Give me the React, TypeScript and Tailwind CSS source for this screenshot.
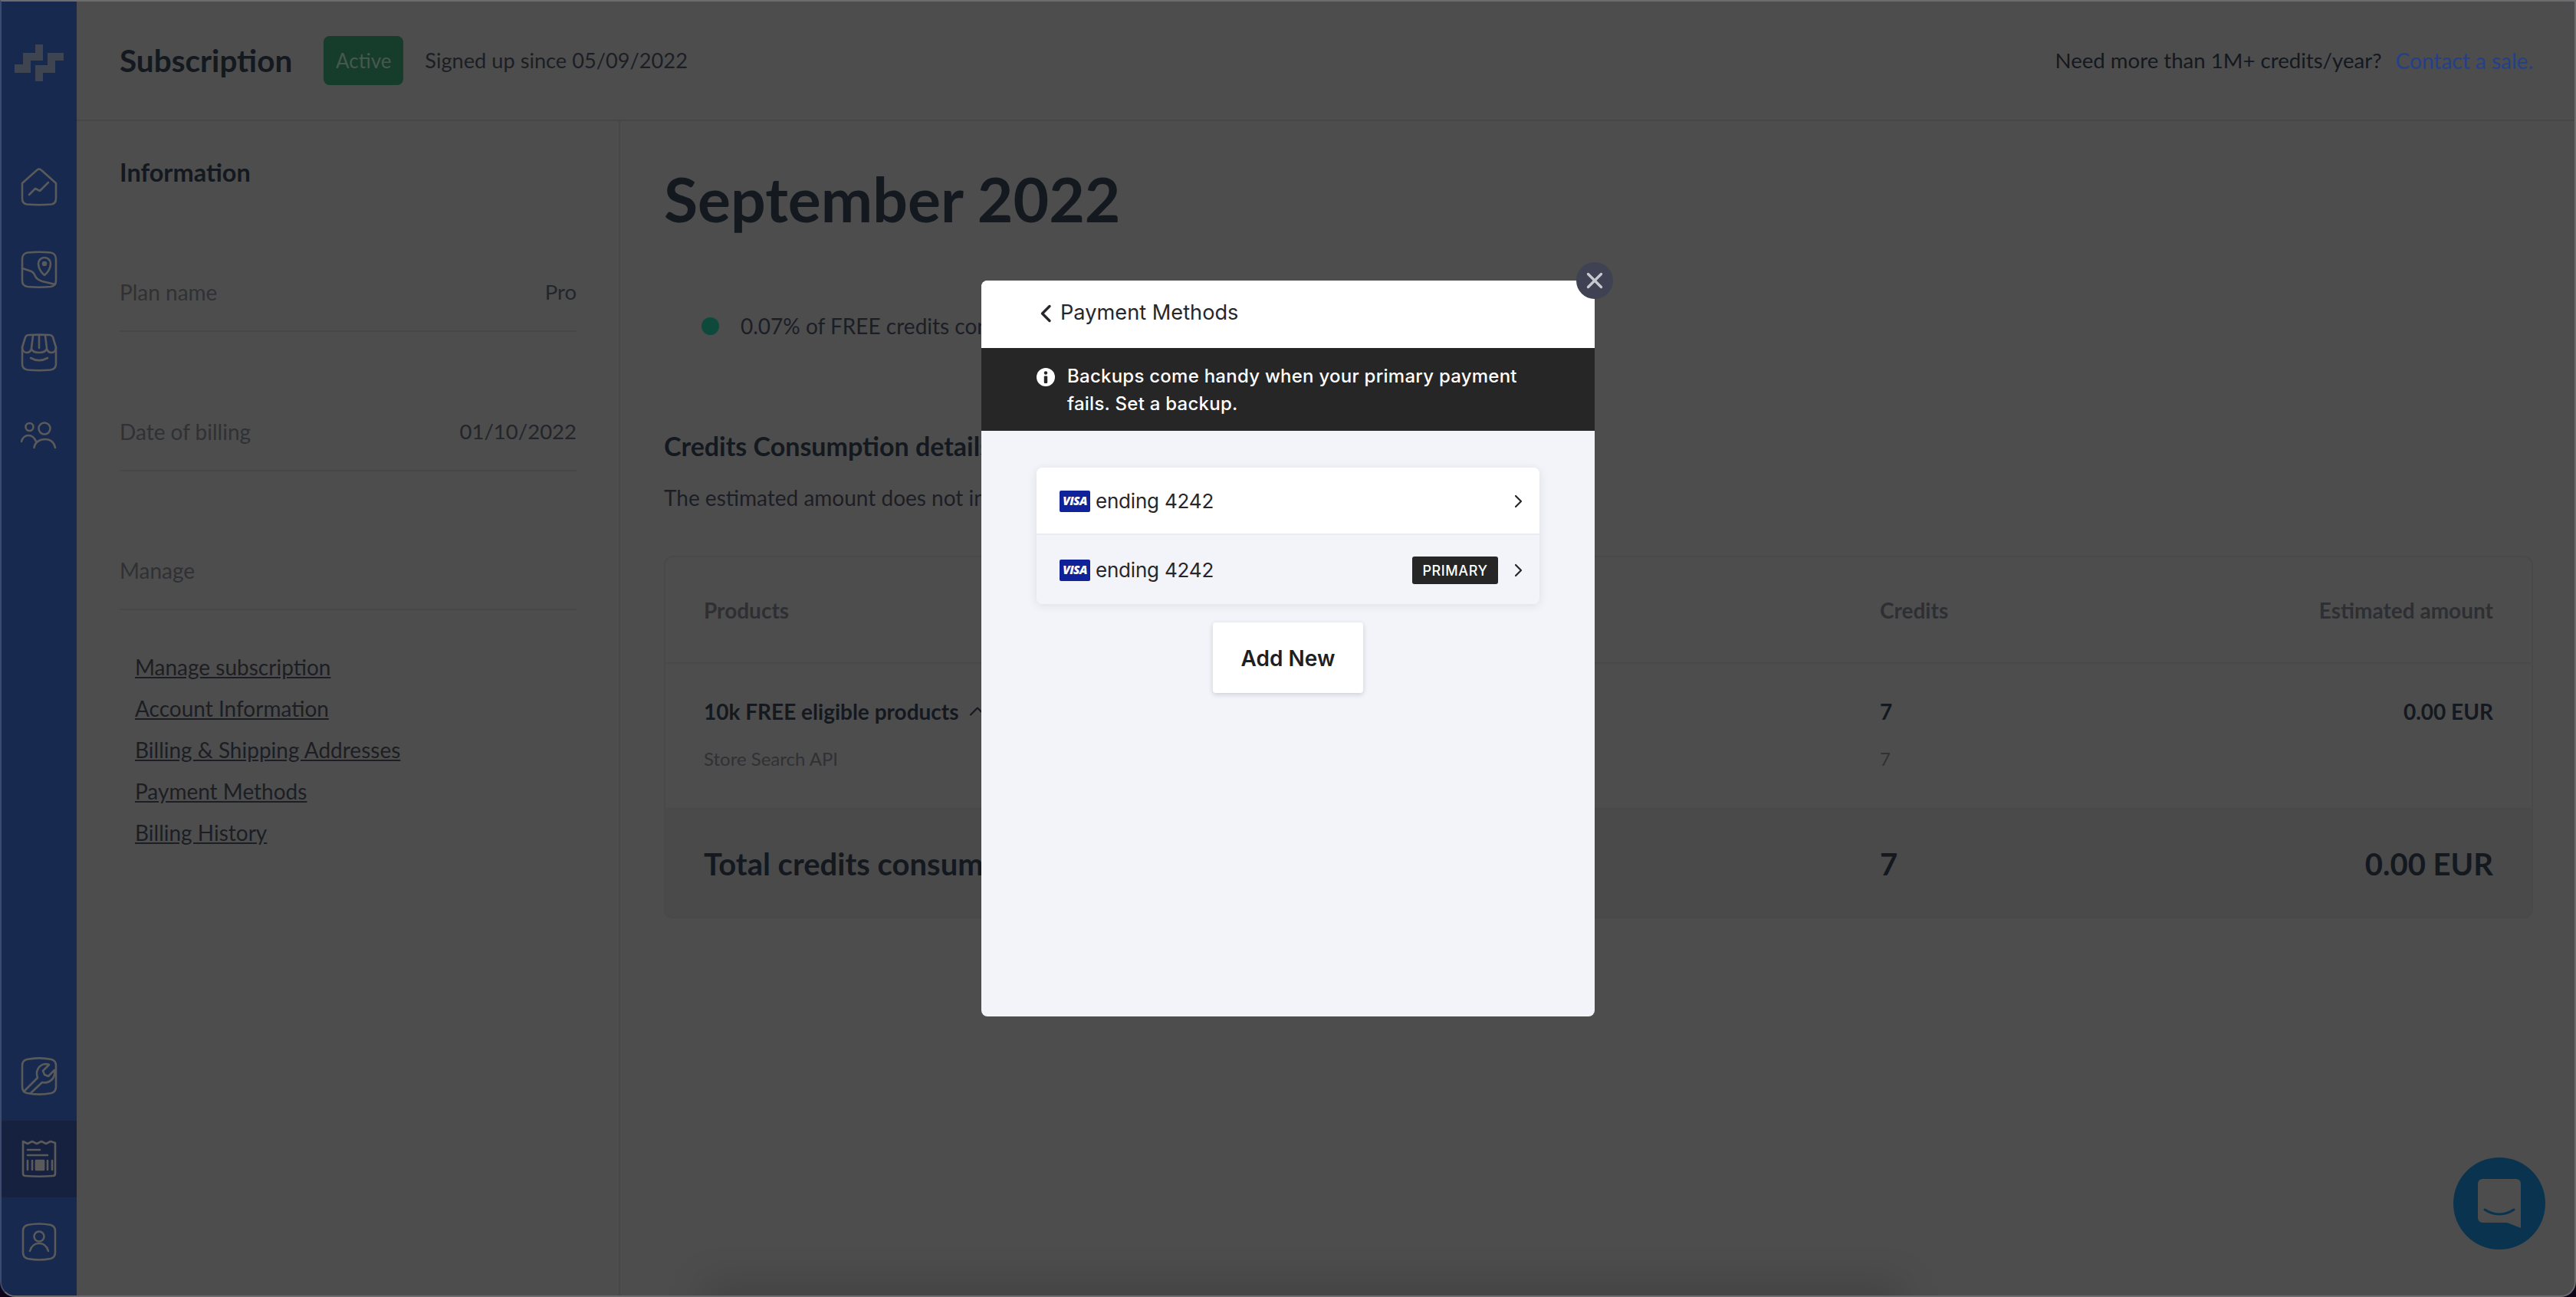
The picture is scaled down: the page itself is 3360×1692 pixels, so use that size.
import { ChevronUp, X } from 'lucide-react';

// Sidebar icons, drawn in a 48x50 box
const NavIcon = ({ children }: { children: React.ReactNode }) => (
  <svg width="48" height="50" viewBox="0 0 48 50" fill="none" stroke="#5a5a5a" strokeWidth="2.6" strokeLinecap="round" strokeLinejoin="round">
    {children}
  </svg>
);

const Logo = () => (
  <svg width="64" height="48" viewBox="18 58 64 48" fill="#3e4450">
    <path d="M45 58h10v21H39v5H29V69h16z" />
    <path d="M18 84h21v11H18z" />
    <path d="M61 69h21v10H71v16H55v11H45V85h16z" />
  </svg>
);

const topNav = [
  <NavIcon key="home">
    <path d="M2 20 21 3a4 4 0 0 1 6 0l19 17v20c0 5-2 7-6 7.500-10 1-22 1-32 0-4-.5-6-2.500-6-7.500z" />
    <path d="M11 35l8-8 6 3 11-11" />
  </NavIcon>,
  <NavIcon key="map">
    <path d="M2 11c0-5 3-8 7-8.500 10-1 20-1 30 0 4 .5 7 3.500 7 8.500v28c0 5-3 7.500-7 8-10 1-20 1-30 0-4-.5-7-3-7-8z" />
    <path d="M2 23l12 4c4 2 4 5 6 8 2 3 5 4 8 5l17 4" />
    <path d="M31 9c5 0 8 4 8 8 0 6-4 12-8 15-4-3-8-9-8-15 0-4 3-8 8-8z" />
    <circle cx="31" cy="17" r="2" fill="#5a5a5a" />
  </NavIcon>,
  <NavIcon key="store">
    <path d="M2 18v22c0 5 3 7 7 7.500 10 1 20 1 30 0 4-.5 7-2.500 7-7.500V18" />
    <path d="M10 2c9-.5 19-.5 28 0 2 0 3 1 4 3l4 13c0 4-2 7-6 7-3 0-5-2-6-5-1 3-5 5-10 5s-9-2-10-5c-1 3-3 5-6 5-4 0-6-3-6-7l4-13c1-2 2-3 4-3z" />
    <path d="M16 3l-2 16M24 3v16M32 3l2 16" />
    <path d="M13 32c7 4 15 4 22 0" />
  </NavIcon>,
  <NavIcon key="users">
    <circle cx="11.500" cy="14" r="5" />
    <circle cx="31" cy="16" r="7.500" />
    <path d="M1 33c1-5 5-8 9-8 4 0 8 3 10 8" />
    <path d="M17.500 41c1-7 7-11 14-11s12 4 13.500 11" />
  </NavIcon>,
];

const bottomNav = [
  <NavIcon key="tool">
    <path d="M2 11c0-4 2-7 6-8 10-2 22-2 32 0 4 1 6 4 6 8v28c0 4-2 7-6 8-10 2-22 2-32 0-4-1-6-4-6-8z" />
    <path d="M4 45l18-18c-3-8 1-17 10-18 2 0 4 0 5 1l-8 8 2 5 5 2 8-8c2 10-6 18-16 16L13 47" />
  </NavIcon>,
  <NavIcon key="receipt">
    <path d="M3 2l6 3 6-3 6 3 6-3 6 3 6-3 6 2v40c0 2-1 3-3 3-12 1-24 1-36 0-2 0-3-1-3-3z" />
    <path d="M9 13h16M9 20h26M9 27v12M15 27v12M35 27v12M41 27v12" />
    <path d="M20 27h10v12H20z" fill="#5a5a5a" />
  </NavIcon>,
  <NavIcon key="user">
    <path d="M3 11c0-4 2-7 6-8 10-2 20-2 30 0 4 1 6 4 6 8v28c0 4-2 7-6 8-10 2-20 2-30 0-4-1-6-4-6-8z" />
    <circle cx="24" cy="18" r="6.500" />
    <path d="M12 37c2-7 7-10 12-10s10 3 12 10" />
  </NavIcon>,
];

const InfoRow = ({ label, value }: { label: string; value?: string }) => (
  <div className="flex h-[100px] items-center justify-between border-b-2 border-[#474747] pb-[2px] text-[28px] leading-9">
    <span className="text-[#2f3134]">{label}</span>
    {value && <span className="text-[27.500px] text-[#23252a]">{value}</span>}
  </div>
);

const VisaMark = () => (
  <span className="flex h-[28px] w-[40px] shrink-0 items-center justify-center rounded-[2px] bg-[#10229a] text-[15.500px] leading-none font-extrabold tracking-[-0.6px] text-white italic [font-family:'Open_Sans',sans-serif]">
    VISA
  </span>
);

const CardRow = ({ primary }: { primary?: boolean }) => (
  <div className={`flex items-center pt-[2px] pr-[22px] pl-[30px] ${primary ? 'h-[90px] bg-[#f3f4f9]' : 'h-[88px] bg-white'}`}>
    <VisaMark />
    <span className="ml-[7px] text-[26px] leading-9 tracking-[-0.2px] text-[#26272b]">ending 4242</span>
    {primary && (
      <span className="ml-auto flex h-[36px] w-[112px] items-center justify-center rounded-[3px] bg-[#262626] text-[18px] font-medium tracking-[0.6px] text-white">
        PRIMARY
      </span>
    )}
    <svg className={primary ? 'ml-[20px]' : 'ml-auto'} width="12" height="18" viewBox="0 0 12 18" fill="none" stroke="#26272b" strokeWidth="2.2" strokeLinecap="round" strokeLinejoin="round">
      <path d="M3 2l7 7-7 7" />
    </svg>
  </div>
);

const App = () => {
  const links = ['Manage subscription', 'Account Information', 'Billing & Shipping Addresses', 'Payment Methods', 'Billing History'];

  return (
    <div className="relative h-[1692px] w-[3360px] overflow-hidden bg-[#0c0618] font-['Lato',sans-serif]">
      <div className="flex h-full overflow-hidden rounded-b-[20px] border-2 border-[#6b6b70] border-l-[#3c4a6e] bg-[#4d4d4d]">
        {/* Sidebar */}
        <aside className="flex w-[98px] flex-col items-center bg-[#18294f]">
          <div className="flex h-[192px] w-full items-start justify-center pt-[56px]">
            <Logo />
          </div>
          <nav className="flex w-full flex-col gap-2">
            {topNav.map((icon, i) => (
              <div key={i} className="flex h-[100px] items-center justify-center">
                {icon}
              </div>
            ))}
          </nav>
          <nav className="mt-auto mb-[20px] flex w-full flex-col gap-2">
            {bottomNav.map((icon, i) => (
              <div key={i} className={`flex h-[100px] items-center justify-center ${i === 1 ? 'bg-[#16213f]' : ''}`}>
                {icon}
              </div>
            ))}
          </nav>
        </aside>

        <div className="relative flex min-w-0 flex-1 flex-col overflow-hidden">
          {/* Header */}
          <header className="flex h-[156px] shrink-0 items-center border-b-2 border-[#464646] pr-[54px] pl-[56px]">
            <h1 className="text-[40.500px] font-bold text-[#14181f]">Subscription</h1>
            <span className="ml-[41px] flex h-[64px] w-[104px] items-center justify-center rounded-[8px] bg-[#163c2c] text-[26px] text-[#47584f]">
              Active
            </span>
            <span className="ml-[28px] text-[27.200px] text-[#1c1e24]">Signed up since 05/09/2022</span>
            <span className="ml-auto text-[27.600px] text-[#14181f]">Need more than 1M+ credits/year?</span>
            <span className="ml-[18px] text-[28px] text-[#23408a]">Contact a sale.</span>
          </header>

          <div className="flex min-h-0 flex-1">
            {/* Information panel */}
            <section className="w-[709px] shrink-0 border-r-2 border-[#464646] pt-[49px] pr-[55px] pl-[56px]">
              <h2 className="text-[32.500px] leading-9 font-bold text-[#14181f]">Information</h2>
              <div className="mt-[90px]">
                <InfoRow label="Plan name" value="Pro" />
              </div>
              <div className="mt-[82px]">
                <InfoRow label="Date of billing" value="01/10/2022" />
              </div>
              <div className="mt-[81px]">
                <InfoRow label="Manage" />
              </div>
              <ul className="mt-[47px] ml-[20px] text-[28px] leading-[54px] text-[#1c1e24]">
                {links.map((link) => (
                  <li key={link} className="underline">
                    {link}
                  </li>
                ))}
              </ul>
            </section>

            {/* Main content */}
            <main className="min-w-0 flex-1 pt-[53px] pr-[54px] pl-[57px]">
              <h2 className="text-[80.500px] leading-[96px] font-bold text-[#14181f]">September 2022</h2>
              <div className="mt-[98px] ml-[49px] flex h-[40px] items-center">
                <span className="h-[23px] w-[23px] rounded-full bg-[#0e4a3b]" />
                <span className="ml-[28px] text-[28px] text-[#1c1e26]">0.07% of FREE credits consumed</span>
              </div>
              <h3 className="mt-[117px] text-[34px] leading-10 font-bold text-[#14181f]">Credits Consumption details</h3>
              <p className="mt-[29px] text-[28px] leading-9 text-[#1c1e26]">The estimated amount does not include taxes</p>

              <div className="mt-[58px] overflow-hidden rounded-[12px] border-2 border-[#494949]">
                <div className="grid h-[139px] grid-cols-[1534px_1fr_auto] items-center border-b-2 border-[#494949] px-[50px] text-[28px] font-bold text-[#2e2f33]">
                  <span>Products</span>
                  <span>Credits</span>
                  <span>Estimated amount</span>
                </div>
                <div className="h-[190px] border-b-2 border-[#494949] px-[50px] pt-[44px]">
                  <div className="grid grid-cols-[1534px_1fr_auto] items-center text-[28px] leading-9 font-bold text-[#14181f]">
                    <span className="flex items-center">
                      10k FREE eligible products
                      <ChevronUp className="ml-[6px]" size={36} strokeWidth={1.4} />
                    </span>
                    <span>7</span>
                    <span>0.00 EUR</span>
                  </div>
                  <div className="mt-[28px] grid grid-cols-[1534px_1fr_auto] items-center text-[24px] leading-8 text-[#2f3134]">
                    <span>Store Search API</span>
                    <span>7</span>
                  </div>
                </div>
                <div className="grid h-[140px] grid-cols-[1534px_1fr_auto] items-center bg-[#4a4a4a] px-[50px] pt-[2px] text-[40px] font-bold text-[#14181f]">
                  <span>Total credits consumed</span>
                  <span>7</span>
                  <span>0.00 EUR</span>
                </div>
              </div>
            </main>
          </div>

          {/* Faint blurred shadow along the bottom edge */}
          <div className="absolute -bottom-[24px] left-[820px] h-[40px] w-[1560px] bg-black/15 blur-[24px]" />
        </div>
      </div>

      {/* Chat launcher */}
      <div className="absolute right-[40px] bottom-[62px] flex h-[120px] w-[120px] items-center justify-center rounded-full bg-[#0a3350]">
        <svg width="56" height="64" viewBox="0 0 56 64">
          <path d="M6 0h44a6 6 0 0 1 6 6v58l-18-7H6a6 6 0 0 1-6-6V6a6 6 0 0 1 6-6z" fill="#4d4d4d" />
          <path d="M9 40c12 8 26 8 38 0" fill="none" stroke="#0a3350" strokeWidth="3" strokeLinecap="round" />
        </svg>
      </div>

      {/* Payment methods modal */}
      <div className="absolute inset-0 flex items-center justify-center font-['Inter',sans-serif]">
        <div className="relative flex h-[960px] w-[800px] flex-col rounded-[8px] bg-[#f3f4f9]">
          <button className="absolute -top-[24px] -right-[24px] z-10 flex h-[48px] w-[48px] items-center justify-center rounded-full bg-[#3f4252] text-[#c8c9cf]">
            <X size={34} strokeWidth={2.4} />
          </button>
          <div className="flex h-[88px] shrink-0 items-center rounded-t-[8px] bg-white pb-[3px] pl-[76px]">
            <svg width="16" height="24" viewBox="0 0 16 24" fill="none" stroke="#26272b" strokeWidth="3.400" strokeLinecap="round" strokeLinejoin="round">
              <path d="M13 2.500 3.500 12l9.500 9.500" />
            </svg>
            <span className="ml-[11px] text-[27.200px] text-[#26272b]">Payment Methods</span>
          </div>
          <div className="flex h-[108px] shrink-0 bg-[#262626] pt-[19px] pl-[72px] text-white">
            <svg className="mt-[7px] shrink-0" width="24" height="24" viewBox="0 0 24 24">
              <circle cx="12" cy="12" r="12" fill="#fff" />
              <circle cx="12" cy="6.500" r="2.200" fill="#262626" />
              <rect x="9.800" y="10.500" width="4.400" height="9.500" rx="1" fill="#262626" />
            </svg>
            <p className="ml-[16px] w-[600px] text-[24px] leading-9 font-medium tracking-[0.25px]">
              Backups come handy when your primary payment fails. Set a backup.
            </p>
          </div>
          <div className="flex flex-1 flex-col items-center pt-[48px]">
            <div className="w-[656px] divide-y-2 divide-[#ececf0] overflow-hidden rounded-[8px] shadow-[0_2px_12px_rgba(40,40,60,0.1)]">
              <CardRow />
              <CardRow primary />
            </div>
            <button className="mt-[24px] h-[92px] w-[196px] rounded-[4px] bg-white pt-[2px] text-[28px] font-semibold text-[#1f1f22] shadow-[0_2px_6px_rgba(40,40,60,0.18)]">
              Add New
            </button>
          </div>
        </div>
      </div>
    </div>
  );
};

export default App;
